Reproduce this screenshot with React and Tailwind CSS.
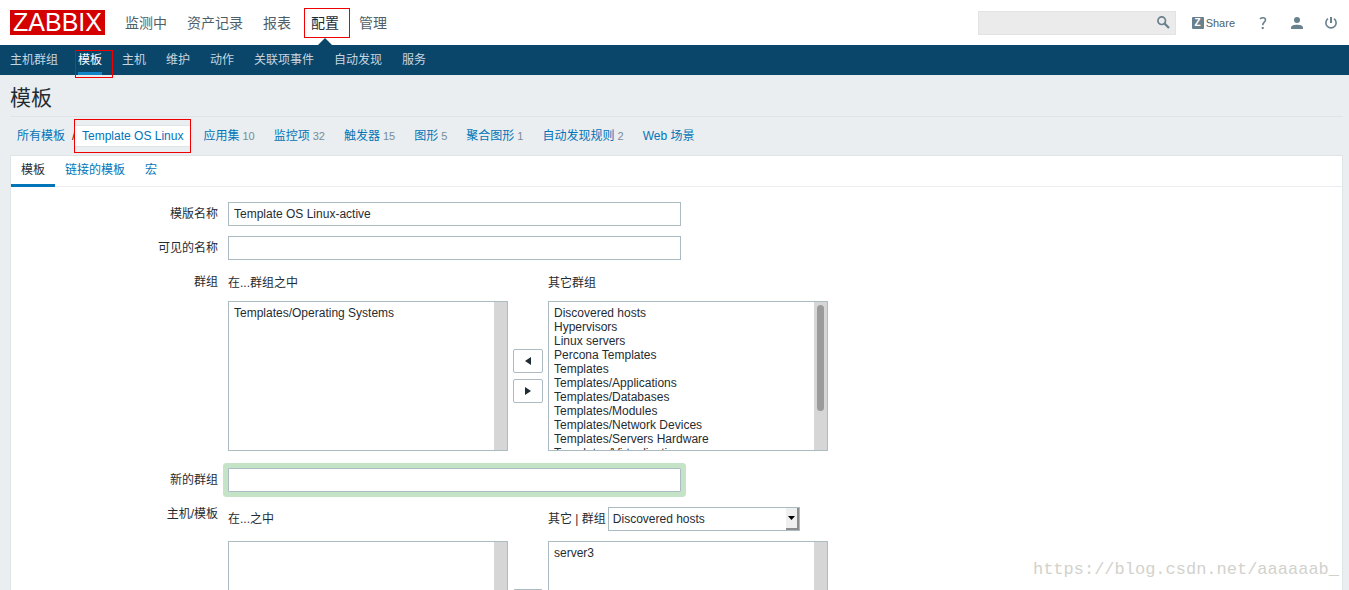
import { useState } from 'react';
import clsx from 'clsx';

const mainMenu = ['监测中', '资产记录', '报表', '配置', '管理'];

const subMenu = ['主机群组', '模板', '主机', '维护', '动作', '关联项事件', '自动发现', '服务'];

const objectLinks = [
    { label: '应用集', count: 10 },
    { label: '监控项', count: 32 },
    { label: '触发器', count: 15 },
    { label: '图形', count: 5 },
    { label: '聚合图形', count: 1 },
    { label: '自动发现规则', count: 2 },
    { label: 'Web 场景' },
];

const tabs = ['模板', '链接的模板', '宏'];

const otherGroups = [
    'Discovered hosts',
    'Hypervisors',
    'Linux servers',
    'Percona Templates',
    'Templates',
    'Templates/Applications',
    'Templates/Databases',
    'Templates/Modules',
    'Templates/Network Devices',
    'Templates/Servers Hardware',
    'Templates/Virtualization',
];

// red frame laid over a menu item
function Mark({ className }) {
    return <span className={clsx('absolute border border-[#f00000] pointer-events-none', className)} />;
}

function Header() {
    return (
        <header className="flex items-center justify-between h-[45px] pl-2.5 pr-3 bg-white">
            <div className="flex items-center">
                <a href="#" className="flex items-center justify-center w-[95px] h-[25px] bg-[#d40000] text-white text-[25px] leading-[25px]">
                    ZABBIX
                </a>
                <nav className="flex gap-5 ml-5 text-[14px] leading-5">
                    {mainMenu.map((item) => (
                        <a key={item} href="#" className={clsx('relative', item === '配置' ? 'text-[#1f2c33]' : 'text-[#4f5f69]')}>
                            {item}
                            {item === '配置' && (
                                <>
                                    <Mark className="-left-[7px] -top-[5px] w-[46px] h-[30px]" />
                                    <svg className="absolute left-[6px] top-[25px]" width="16" height="8" viewBox="0 0 16 8">
                                        <path d="M0 8L8 0L16 8Z" fill="#0a466a" />
                                    </svg>
                                </>
                            )}
                        </a>
                    ))}
                </nav>
            </div>
            <div className="flex items-center text-[#69808d]">
                <form className="flex items-center w-[198px] h-6 mr-4 border border-[#e3e3e3] bg-[#ebebeb]">
                    <input type="text" aria-label="搜索" className="flex-1 min-w-0 h-full px-1 bg-transparent outline-none" />
                    <button type="button" aria-label="搜索" className="px-[5px]">
                        <svg width="13" height="13" viewBox="0 0 13 13" fill="none" stroke="currentColor">
                            <circle cx="4.7" cy="4.7" r="3.8" strokeWidth="1.7" />
                            <path d="M7.4 7.4L12 12" strokeWidth="2.2" />
                        </svg>
                    </button>
                </form>
                <a href="#" className="flex items-center gap-0.5 text-[11px] leading-4">
                    <span className="flex items-center justify-center w-3 h-3 rounded-[1px] bg-[#69808d] text-white text-[10px] leading-3 font-bold">Z</span>
                    <span className="text-[#4f5f69]">Share</span>
                </a>
                <a href="#" aria-label="帮助" className="ml-6">
                    <svg width="8" height="12" viewBox="0 0 8 12" fill="none" stroke="currentColor" strokeWidth="1.6">
                        <path d="M1 1.8C2.2 0.8 3.2 0.8 4 0.8C5.8 0.8 6.5 1.7 6.5 3C6.5 5.2 3.7 5.2 3.7 8.2" />
                        <path d="M3.7 10V12" strokeWidth="2" />
                    </svg>
                </a>
                <a href="#" aria-label="用户" className="ml-6">
                    <svg width="12" height="12" viewBox="0 0 12 12" fill="currentColor">
                        <circle cx="6" cy="3" r="3" />
                        <path d="M0 12V10.5C0 8.5 3.5 7.8 6 7.8S12 8.5 12 10.5V12Z" />
                    </svg>
                </a>
                <a href="#" aria-label="退出" className="ml-[22px]">
                    <svg width="12" height="12" viewBox="0 0 12 12" fill="none" stroke="currentColor" strokeWidth="1.6">
                        <path d="M3 1.7A5.1 5.1 0 1 0 9 1.7" />
                        <path d="M6 0V6" strokeWidth="2" />
                    </svg>
                </a>
            </div>
        </header>
    );
}

function SubMenu() {
    return (
        <nav className="flex gap-5 h-[30px] px-2.5 bg-[#0a466a] text-[#c6d6e0]">
            {subMenu.map((item) => (
                <a
                    key={item}
                    href="#"
                    className={clsx('relative leading-[30px] h-[30px]', item === '模板' && 'text-white border-b-3 border-[#1385c9]')}
                >
                    {item}
                    {item === '模板' && <Mark className="-left-[3px] top-[5px] w-[38px] h-7" />}
                </a>
            ))}
        </nav>
    );
}

function Breadcrumbs() {
    return (
        <div className="flex items-center h-[38px] pl-[7px] text-[#0275b8]">
            <a href="#">所有模板</a>
            <span className="w-2.5 pl-[7px] text-[#1f2c33]">/</span>
            <span className="relative px-[7px] border-y border-[#dfe4e7] bg-white leading-5">
                <a href="#">Template OS Linux</a>
                <Mark className="-inset-x-px -top-[7px] -bottom-[7px]" />
            </span>
            <div className="flex gap-[19px] ml-[13px]">
                {objectLinks.map(({ label, count }) => (
                    <span key={label}>
                        <a href="#">{label}</a>
                        {count && <span className="ml-[3px] text-[11px] text-[#768d99]">{count}</span>}
                    </span>
                ))}
            </div>
        </div>
    );
}

function Row({ label, htmlFor, children }) {
    return (
        <div className="flex gap-2.5 mb-2.5">
            <label htmlFor={htmlFor} className="w-[207px] text-right leading-6">{label}</label>
            <div>{children}</div>
        </div>
    );
}

function TextField({ id, className, ...props }) {
    return (
        <input
            id={id}
            type="text"
            className={clsx('block w-[453px] h-6 px-[5px] border border-[#acbbc2] bg-white outline-none', className)}
            {...props}
        />
    );
}

function ListBox({ label, options, thumb }) {
    return (
        <div className="flex w-[280px] h-[150px] border border-[#acbbc2] bg-white">
            <select
                multiple
                aria-label={label}
                className="flex-1 min-w-0 h-full py-1 pl-[5px] outline-none overflow-y-auto [scrollbar-width:none]"
            >
                {options.map((option) => (
                    <option key={option} className="p-0 min-h-0 h-[14px] leading-[14px]">{option}</option>
                ))}
            </select>
            <div className="w-[13px] pt-[3px] bg-[#d6d6d6]">
                {thumb && <div className="w-[7px] h-[106px] mx-auto rounded-full bg-[#9b9b9b]" />}
            </div>
        </div>
    );
}

function MoveButton({ label, path }) {
    return (
        <button type="button" aria-label={label} className="flex items-center justify-center w-[30px] h-6 border border-[#acbbc2] rounded-[2px] bg-white">
            <svg width="6" height="8" viewBox="0 0 6 8" fill="#1f2c33">
                <path d={path} />
            </svg>
        </button>
    );
}

function TwinBox({ left, right, header, leftOptions, rightOptions, thumb, className }) {
    return (
        <div className={clsx('grid grid-cols-[280px_40px_280px]', className)}>
            <div className="self-center">{left}</div>
            <div />
            <div className="flex items-center">{header ?? right}</div>
            <ListBox label={left} options={leftOptions} />
            <div className="flex flex-col items-center gap-1.5 pt-12">
                <MoveButton label="添加" path="M6 0V8L0 4Z" />
                <MoveButton label="移除" path="M0 0V8L6 4Z" />
            </div>
            <ListBox label={right} options={rightOptions} thumb={thumb} />
        </div>
    );
}

function TemplateForm() {
    const [name, setName] = useState('Template OS Linux-active');
    const [visibleName, setVisibleName] = useState('');
    const [newGroup, setNewGroup] = useState('');

    return (
        <form className="pt-[15px]">
            <Row label="模版名称" htmlFor="name">
                <TextField id="name" value={name} onChange={(e) => setName(e.target.value)} />
            </Row>
            <Row label="可见的名称" htmlFor="visible-name">
                <TextField id="visible-name" value={visibleName} onChange={(e) => setVisibleName(e.target.value)} />
            </Row>
            <Row label="群组">
                <div className="pb-[7px]">
                    <TwinBox
                        className="gap-y-[5px] leading-[26px]"
                        left="在...群组之中"
                        right="其它群组"
                        leftOptions={['Templates/Operating Systems']}
                        rightOptions={otherGroups}
                        thumb
                    />
                </div>
            </Row>
            <Row label="新的群组" htmlFor="new-group">
                <TextField
                    id="new-group"
                    className="ring-5 ring-[#c5e4c7] rounded-[1px]"
                    value={newGroup}
                    onChange={(e) => setNewGroup(e.target.value)}
                />
            </Row>
            <Row label="主机/模板">
                <div className="pt-[5px]">
                    <TwinBox
                        className="gap-y-2.5 leading-6"
                        left="在...之中"
                        right="其它"
                        header={
                            <>
                                <label htmlFor="group-filter">其它 | 群组</label>
                                <span className="flex w-48 h-6 ml-0.5 border border-[#acbbc2] bg-white">
                                    <select id="group-filter" className="appearance-none flex-1 min-w-0 h-full pl-1 outline-none leading-[22px]">
                                        {otherGroups.map((group) => (
                                            <option key={group}>{group}</option>
                                        ))}
                                    </select>
                                    <span className="flex items-center justify-center w-[13px] border-r-2 border-b-2 border-[#8c8c8c] bg-[#efefef] pointer-events-none">
                                        <svg width="7" height="4" viewBox="0 0 7 4">
                                            <path d="M0 0H7L3.5 4Z" fill="#000" />
                                        </svg>
                                    </span>
                                </span>
                            </>
                        }
                        leftOptions={[]}
                        rightOptions={['server3']}
                    />
                </div>
            </Row>
        </form>
    );
}

export default function App() {
    const [tab, setTab] = useState('模板');

    return (
        <div className="relative flex flex-col h-screen overflow-hidden bg-[#ebeef0] text-[12px] text-[#1f2c33] font-['Liberation_Sans','Noto_Sans_CJK_SC',sans-serif]">
            <Header />
            <SubMenu />
            <main className="flex-1 flex flex-col min-h-0 pl-2.5 pr-1.5">
                <h1 className="h-[42px] pt-[7px] text-[21px] leading-8 border-b border-[#dfe4e7]">模板</h1>
                <Breadcrumbs />
                <section className="flex-1 min-h-0 overflow-hidden border border-b-0 border-[#dfe4e7] bg-white">
                    <div className="flex h-[31px] border-b border-[#ebeef0]">
                        {tabs.map((item) => (
                            <button
                                key={item}
                                type="button"
                                onClick={() => setTab(item)}
                                className={clsx('px-2.5 h-[31px] border-b-3', tab === item ? 'border-[#0275b8]' : 'border-transparent text-[#0275b8]')}
                            >
                                {item}
                            </button>
                        ))}
                    </div>
                    <TemplateForm />
                </section>
            </main>
            <div className="absolute right-2.5 bottom-2 text-[17px] leading-6 text-[#d2d2cc] font-['Liberation_Mono',monospace] pointer-events-none">
                https://blog.csdn.net/aaaaaab_
            </div>
        </div>
    );
}
